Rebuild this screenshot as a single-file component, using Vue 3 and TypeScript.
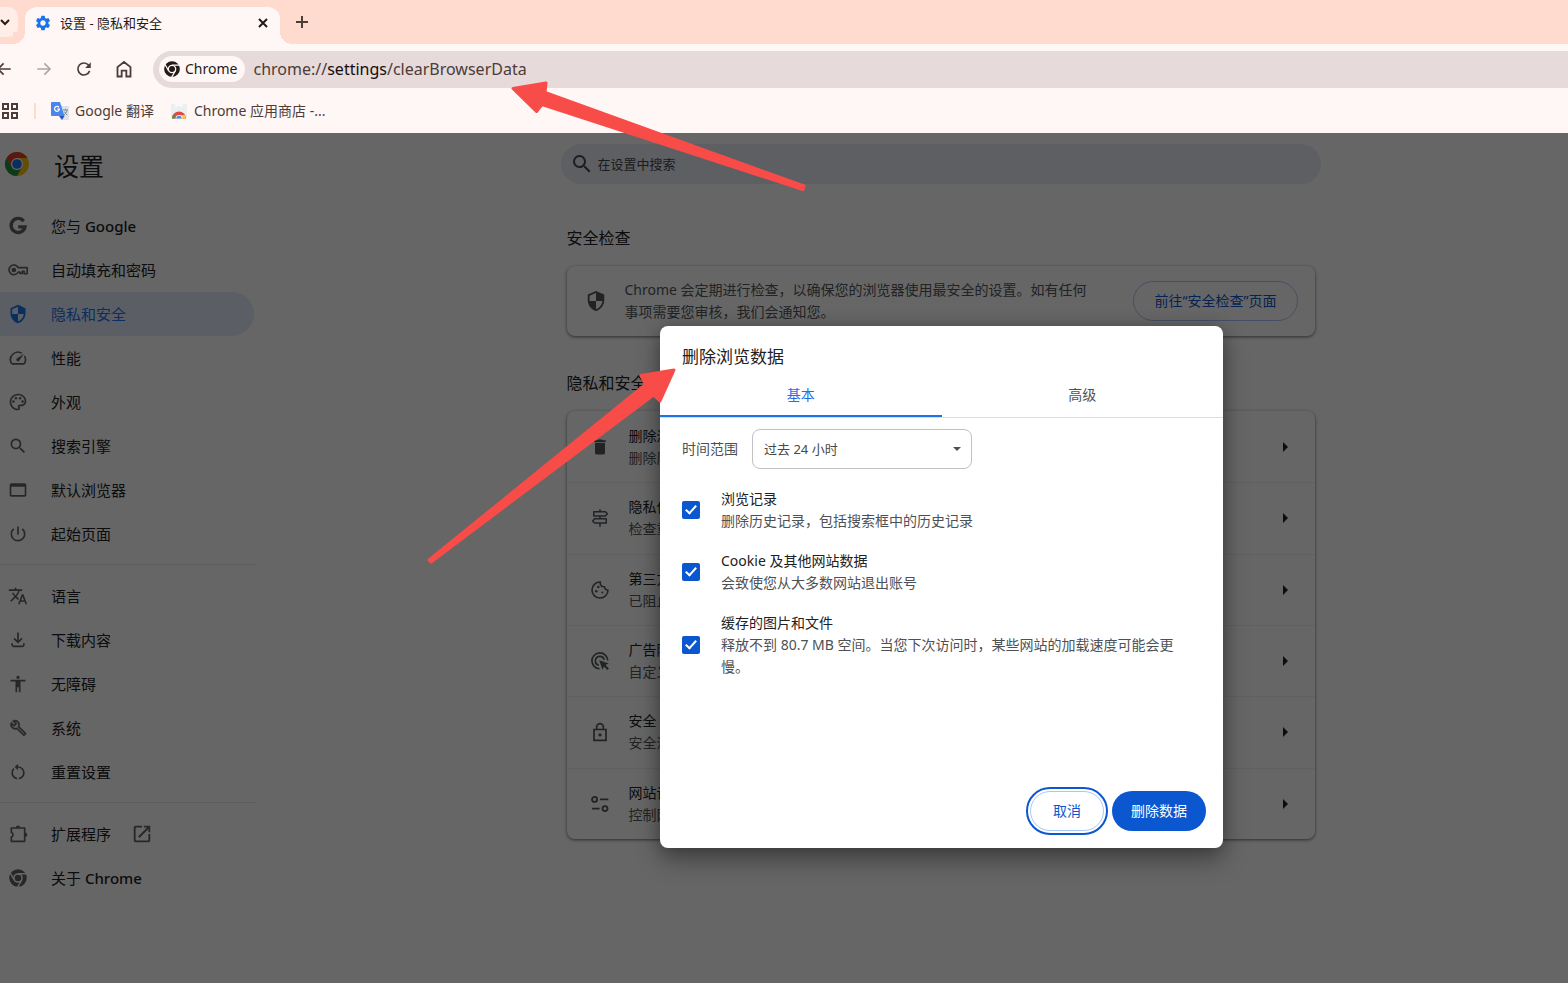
<script setup lang="ts">
import { ref } from 'vue'

interface NavItem {
  icon: string
  label: string
  product?: string
  active?: boolean
  external?: boolean
}

interface SettingRow {
  icon: string
  title: string
  detail: string
}

const icons: Record<string, string> = {
  google:
    '<path fill="none" stroke="currentColor" stroke-width="4" d="M18.8 6.2A8.4 8.4 0 1 0 20.4 13H12.2"/>',
  key:
    '<path fill="none" stroke="currentColor" stroke-width="2" stroke-linejoin="round" d="M12.2 9.2H23v7.300h-3.600v-3h-2.200v2.500h-3v-1.600h-2A5.800 5.800 0 1 1 12.200 9.200z"/><circle cx="7" cy="12" r="2.800"/>',
  shield:
    '<path d="M12 1 3 5v6c0 5.55 3.84 10.74 9 12 5.16-1.26 9-6.45 9-12V5l-9-4zm0 10.99h7c-.53 4.12-3.28 7.79-7 8.94V12H5V6.3l7-3.11v8.8z"/>',
  speed:
    '<path d="m20.38 8.57-1.23 1.85a8 8 0 0 1-.22 7.58H5.07A8 8 0 0 1 15.58 6.85l1.85-1.23A10 10 0 0 0 3.35 19a2 2 0 0 0 1.72 1h13.85a2 2 0 0 0 1.74-1 10 10 0 0 0-.27-10.44z"/><path d="M10.59 15.41a2 2 0 0 0 2.83 0l5.66-8.49-8.49 5.66a2 2 0 0 0 0 2.83z"/>',
  palette:
    '<path d="M12 22C6.49 22 2 17.51 2 12S6.49 2 12 2s10 4.04 10 9c0 3.31-2.69 6-6 6h-1.77c-.28 0-.5.22-.5.5 0 .12.05.23.13.33.41.47.64 1.06.64 1.67A2.5 2.5 0 0 1 12 22zm0-18c-4.41 0-8 3.59-8 8s3.59 8 8 8c.28 0 .5-.22.5-.5a.54.54 0 0 0-.14-.35c-.41-.46-.63-1.05-.63-1.65a2.5 2.5 0 0 1 2.5-2.5H16c2.21 0 4-1.79 4-4 0-3.86-3.59-7-8-7z"/><circle cx="6.5" cy="11.5" r="1.5"/><circle cx="9.5" cy="7.5" r="1.5"/><circle cx="14.5" cy="7.5" r="1.5"/><circle cx="17.5" cy="11.5" r="1.5"/>',
  search:
    '<path d="M15.5 14h-.79l-.28-.27A6.471 6.471 0 0 0 16 9.5 6.5 6.5 0 1 0 9.5 16c1.61 0 3.09-.59 4.23-1.57l.27.28v.79l5 4.99L20.49 19l-4.99-5zm-6 0C7.01 14 5 11.99 5 9.5S7.01 5 9.5 5 14 7.01 14 9.5 11.99 14 9.5 14z"/>',
  window:
    '<path d="M20 4H4c-1.11 0-2 .9-2 2v12c0 1.1.89 2 2 2h16c1.1 0 2-.9 2-2V6c0-1.1-.89-2-2-2zm0 14H4V8h16v10z"/>',
  power:
    '<path d="M13 3h-2v10h2V3zm4.83 2.17-1.42 1.42A6.92 6.92 0 0 1 19 12c0 3.87-3.13 7-7 7A6.995 6.995 0 0 1 7.58 6.58L6.17 5.17A8.932 8.932 0 0 0 3 12a9 9 0 0 0 18 0c0-2.74-1.23-5.18-3.17-6.83z"/>',
  translate:
    '<path d="m12.87 15.07-2.54-2.51.03-.03A17.52 17.52 0 0 0 14.07 6H17V4h-7V2H8v2H1v1.99h11.17C11.5 7.92 10.44 9.75 9 11.35 8.07 10.32 7.3 9.19 6.69 8h-2c.73 1.63 1.73 3.17 2.98 4.56l-5.09 5.02L4 19l5-5 3.11 3.11.76-2.04zM18.5 10h-2L12 22h2l1.12-3h4.75L21 22h2l-4.5-12zm-2.62 7 1.62-4.33L19.12 17h-3.24z"/>',
  download:
    '<path fill="none" stroke="currentColor" stroke-width="2" d="M12 3v11.5M7.2 10l4.8 4.8 4.8-4.8M5 16v2a1.6 1.6 0 0 0 1.6 1.6h10.8A1.6 1.6 0 0 0 19 18v-2"/>',
  accessibility:
    '<path d="M12 2c1.1 0 2 .9 2 2s-.9 2-2 2-2-.9-2-2 .9-2 2-2zm9 7h-6v13h-2v-6h-2v6H9V9H3V7h18v2z"/>',
  wrench:
    '<g transform="translate(2 1.6) scale(.87)" stroke="currentColor" stroke-width=".5"><path d="M22.61 18.99l-9.08-9.08c.93-2.34.45-5.1-1.44-7C9.79.61 6.21.4 3.66 2.26L7.5 6.11 6.08 7.52 2.25 3.69C.39 6.23.6 9.82 2.9 12.11c1.86 1.86 4.57 2.35 6.89 1.48l9.11 9.11c.39.39 1.02.39 1.41 0l2.3-2.3c.4-.38.4-1.01 0-1.41zm-3 1.6l-9.46-9.46c-.61.45-1.29.72-2 .82-1.36.2-2.79-.21-3.83-1.25C3.37 9.76 2.93 8.5 3 7.26l3.09 3.09 4.24-4.24-3.09-3.09c1.24-.07 2.49.37 3.44 1.31 1.08 1.08 1.49 2.57 1.24 3.96-.12.71-.42 1.37-.88 1.96l9.45 9.45-.88.89z"/></g>',
  reset:
    '<path d="M12 5V2L8 6l4 4V7c3.31 0 6 2.69 6 6 0 2.97-2.17 5.43-5 5.91v2.02c3.95-.49 7-3.85 7-7.93 0-4.42-3.58-8-8-8zm-6 8c0-1.65.67-3.15 1.76-4.24L6.34 7.34A8.014 8.014 0 0 0 4 13c0 4.08 3.05 7.44 7 7.93v-2.02c-2.83-.48-5-2.94-5-5.91z"/>',
  extension:
    '<path fill="none" stroke="currentColor" stroke-width="2" stroke-linejoin="round" d="M4 4.8h16v16H4v-5.2a2.8 2.8 0 0 0 0-5.4z"/><path d="M9.4 4.5a2.6 2.6 0 0 1 5.2 0zM20.5 10.2a2.6 2.6 0 0 1 0 5.2z"/>',
  chrome:
    '<path fill-rule="evenodd" d="M12 1.500a10.500 10.500 0 1 0 0 21 10.500 10.500 0 1 0 0-21zM12 6.200a5.800 5.800 0 1 1 0 11.600 5.800 5.800 0 1 1 0-11.600z"/><circle cx="12" cy="12" r="4"/><path fill="none" stroke="var(--gap)" stroke-width="1.700" d="M12 6.900h10M7.600 14.600 2.700 6M16.400 14.600l-5 8.500"/>',
  launch:
    '<path d="M19 19H5V5h7V3H5a2 2 0 0 0-2 2v14a2 2 0 0 0 2 2h14c1.1 0 2-.9 2-2v-7h-2v7zM14 3v2h3.59l-9.83 9.83 1.41 1.41L19 6.41V10h2V3h-7z"/>',
  trash:
    '<path d="M6 19c0 1.1.9 2 2 2h8c1.1 0 2-.9 2-2V7H6v12zM19 4h-3.5l-1-1h-5l-1 1H5v2h14V4z"/>',
  signpost:
    '<path fill="none" stroke="currentColor" stroke-width="1.8" stroke-linejoin="round" d="M12 1.500v3M12 9.500v3.500M12 18v4.500M4.500 4.500h14L20.800 7l-2.300 2.500h-14zM19.500 13h-14L3.200 15.500 5.500 18h14z"/>',
  cookie:
    '<path fill="none" stroke="currentColor" stroke-width="1.900" stroke-linejoin="round" d="M12.500 2.500A9.600 9.600 0 1 0 21.600 12a3.600 3.600 0 0 1-4.100-4 4.200 4.200 0 0 1-5-5.500z"/><circle cx="10" cy="8.500" r="1.500"/><circle cx="7.500" cy="13.500" r="1.500"/><circle cx="14.800" cy="15" r="1.200"/>',
  ads:
    '<path fill="none" stroke="currentColor" stroke-width="2" d="M11.500 21.300A9.500 9.500 0 1 1 21.300 11.500M10.500 17.100A5.400 5.400 0 1 1 17.100 10.500"/><path d="m11 11 11.500 4-4 1.800 4.200 4.200-1.700 1.700-4.200-4.200-1.800 4z"/>',
  lock:
    '<path fill="none" stroke="currentColor" stroke-width="2" d="M4.800 9h14.400v13H4.800zM8 9V6a4 4 0 0 1 8 0v3"/><circle cx="12" cy="15.500" r="2"/>',
  sliders:
    '<g fill="none" stroke="currentColor" stroke-width="2.200"><circle cx="5.500" cy="6.500" r="3"/><path d="M12 6.500h10M2.500 17.500h9"/><circle cx="18" cy="17.500" r="3"/></g>',
  gear:
    '<path d="M19.140 12.940c.04-.3.060-.61.060-.94 0-.32-.02-.64-.07-.94l2.030-1.580a.49.49 0 0 0 .12-.61l-1.920-3.320a.488.488 0 0 0-.59-.22l-2.390.96c-.5-.38-1.030-.7-1.620-.94l-.36-2.540a.484.484 0 0 0-.48-.41h-3.840c-.24 0-.43.17-.47.41l-.36 2.540c-.59.24-1.130.57-1.620.94l-2.390-.96c-.22-.08-.47 0-.59.22L2.740 8.870c-.12.21-.08.47.12.61l2.030 1.580c-.05.3-.09.63-.09.94s.02.64.070.94l-2.030 1.580a.49.49 0 0 0-.12.61l1.920 3.320c.12.22.37.29.59.22l2.390-.96c.5.38 1.030.7 1.620.94l.36 2.540c.05.24.24.41.48.41h3.840c.24 0 .44-.17.47-.41l.36-2.540c.59-.24 1.130-.56 1.620-.94l2.390.96c.22.080.47 0 .59-.22l1.920-3.320c.12-.22.070-.47-.12-.61l-2.010-1.580zM12 15.600A3.610 3.610 0 0 1 8.400 12c0-1.980 1.620-3.600 3.600-3.600s3.600 1.620 3.600 3.600-1.620 3.600-3.600 3.600z"/>',
  back: '<path fill="none" stroke="currentColor" stroke-width="2.200" d="M21 12H4M11.500 4.500 4 12l7.500 7.500"/>',
  forward: '<path fill="none" stroke="currentColor" stroke-width="2.200" d="M3 12h17M12.500 4.500 20 12l-7.500 7.500"/>',
  reload:
    '<path fill="none" stroke="currentColor" stroke-width="2.200" d="M19.500 14.500A8 8 0 1 1 18.200 7l1.500 1.700"/><path d="M21 3v7.500h-7.500z"/>',
  home:
    '<path fill="none" stroke="currentColor" stroke-width="2.200" d="M4.200 21V9.700L12 3.500l7.800 6.200V21h-5v-7h-5.600v7z"/>',
}

const navGroups: NavItem[][] = [
  [
    { icon: 'google', label: '您与', product: 'Google' },
    { icon: 'key', label: '自动填充和密码' },
    { icon: 'shield', label: '隐私和安全', active: true },
    { icon: 'speed', label: '性能' },
    { icon: 'palette', label: '外观' },
    { icon: 'search', label: '搜索引擎' },
    { icon: 'window', label: '默认浏览器' },
    { icon: 'power', label: '起始页面' },
  ],
  [
    { icon: 'translate', label: '语言' },
    { icon: 'download', label: '下载内容' },
    { icon: 'accessibility', label: '无障碍' },
    { icon: 'wrench', label: '系统' },
    { icon: 'reset', label: '重置设置' },
  ],
  [
    { icon: 'extension', label: '扩展程序', external: true },
    { icon: 'chrome', label: '关于', product: 'Chrome' },
  ],
]

const rows: SettingRow[] = [
  { icon: 'trash', title: '删除浏', detail: '删除历' },
  { icon: 'signpost', title: '隐私保', detail: '检查重' },
  { icon: 'cookie', title: '第三方', detail: '已阻止' },
  { icon: 'ads', title: '广告隐', detail: '自定义' },
  { icon: 'lock', title: '安全', detail: '安全浏' },
  { icon: 'sliders', title: '网站设', detail: '控制网' },
]

const tabs = ['基本', '高级']
const activeTab = ref(0)
const range = ref('过去 24 小时')

const options = ref([
  { id: 'history', title: '浏览记录', detail: '删除历史记录，包括搜索框中的历史记录', checked: true },
  { id: 'cookies', title: 'Cookie 及其他网站数据', detail: '会致使您从大多数网站退出账号', checked: true },
  {
    id: 'cache',
    title: '缓存的图片和文件',
    detail: '释放不到 80.7 MB 空间。当您下次访问时，某些网站的加载速度可能会更慢。',
    checked: true,
  },
])
</script>

<template>
  <div class="browser">
    <header class="chrome-ui">
      <div class="tab-strip">
        <button class="tab-search" type="button" aria-label="搜索标签页">
          <svg viewBox="0 0 10 10" width="10" height="10"><path d="M1 3l4 4 4-4" fill="none" stroke="currentColor" stroke-width="2" /></svg>
        </button>
        <div class="tab">
          <svg class="tab-icon" viewBox="0 0 24 24" width="18" height="18" fill="currentColor" v-html="icons.gear" />
          <span class="tab-title">设置 - 隐私和安全</span>
          <button class="tab-close" type="button" aria-label="关闭">
            <svg viewBox="0 0 10 10" width="10" height="10"><path d="M1 1l8 8M9 1l-8 8" stroke="currentColor" stroke-width="2" /></svg>
          </button>
        </div>
        <button class="new-tab" type="button" aria-label="打开新的标签页">
          <svg viewBox="0 0 12 12" width="12" height="12"><path d="M6 0v12M0 6h12" stroke="currentColor" stroke-width="2" /></svg>
        </button>
      </div>

      <div class="toolbar">
        <button class="tool" type="button" aria-label="后退">
          <svg viewBox="0 0 24 24" width="18" height="18" fill="currentColor" v-html="icons.back" />
        </button>
        <button class="tool dim" type="button" aria-label="前进">
          <svg viewBox="0 0 24 24" width="18" height="18" fill="currentColor" v-html="icons.forward" />
        </button>
        <button class="tool" type="button" aria-label="重新加载">
          <svg viewBox="0 0 24 24" width="18" height="18" fill="currentColor" v-html="icons.reload" />
        </button>
        <button class="tool" type="button" aria-label="主页">
          <svg viewBox="0 0 24 24" width="20" height="20" fill="currentColor" v-html="icons.home" />
        </button>
        <div class="omnibox">
          <button class="site-chip" type="button">
            <svg viewBox="0 0 24 24" width="18" height="18" fill="currentColor" v-html="icons.chrome" />
            <span>Chrome</span>
          </button>
          <div class="url" role="textbox" contenteditable="true" spellcheck="false" aria-label="地址">chrome://<b>settings</b>/clearBrowserData</div>
        </div>
      </div>

      <nav class="bookmarks">
        <button class="apps" type="button" aria-label="应用">
          <svg viewBox="0 0 16 16" width="16" height="16"><path d="M1 1h5v5H1zM10 1h5v5h-5zM1 10h5v5H1zM10 10h5v5h-5z" fill="none" stroke="currentColor" stroke-width="2" /></svg>
        </button>
        <span class="divider" />
        <a class="bookmark" href="#translate">
          <svg viewBox="0 0 18 18" width="18" height="18">
            <path d="M7 4h11v14h-7z" fill="#dfe3e8" />
            <path d="M1 0h8l4.500 14H1a1 1 0 0 1-1-1V1a1 1 0 0 1 1-1z" fill="#4a86ee" />
            <path d="M8 14h5.500L11 18z" fill="#2456c4" />
            <path d="M8 5.300A2.500 2.500 0 1 0 8.500 7.200H6.200" fill="none" stroke="#fff" stroke-width="1.200" />
            <path d="M12 8h5M14.500 6.800V8M16 8.200c-.5 2.300-2 4-3 4.800M13.300 9.500c.6 1.500 1.700 2.700 3 3.500" fill="none" stroke="#7b8794" />
          </svg>
          <span>Google 翻译</span>
        </a>
        <a class="bookmark" href="#store">
          <svg viewBox="0 0 18 18" width="18" height="18">
            <path d="M1 2h16v14.500H1z" fill="#eceff1" />
            <path d="M6 5V3h6v2" fill="none" stroke="#fff" stroke-width="1.200" />
            <path d="M2 16.500a7 7 0 0 1 14 0z" fill="#de4a3d" />
            <path d="M2 16.500a7 7 0 0 1 1-3.600l3.500 3.600z" fill="#2e9e58" />
            <path d="M16 16.500a7 7 0 0 0-1-3.600H11l-1 3.600z" fill="#f8c83a" />
            <path d="M5.500 16.500a3.500 3.500 0 0 1 7 0z" fill="#fff" />
            <path d="M6.300 16.500a2.700 2.700 0 0 1 5.400 0z" fill="#4a8af4" />
          </svg>
          <span>Chrome 应用商店 -...</span>
        </a>
      </nav>
    </header>

    <div class="page">
      <aside class="sidebar">
        <div class="brand">
          <svg viewBox="0 0 24 24" width="24" height="24">
            <circle cx="12" cy="12" r="12" fill="#fbc116" />
            <path d="M12 6h10.400A12 12 0 0 0 1.600 6l5.200 9z" fill="#e33b2e" />
            <path d="M12 24l5.200-9-5.200-3-5.200 3L1.600 6A12 12 0 0 0 12 24z" fill="#229342" />
            <circle cx="12" cy="12" r="6" fill="#fff" />
            <circle cx="12" cy="12" r="4.800" fill="#1a73e8" />
          </svg>
          <h1>设置</h1>
        </div>
        <nav class="menu">
          <div v-for="(group, g) in navGroups" :key="g" class="group">
            <a v-for="item in group" :key="item.label" href="#" class="nav-item" :class="{ active: item.active }">
              <svg viewBox="0 0 24 24" width="20" height="20" fill="currentColor" v-html="icons[item.icon]" />
              <span>{{ item.label }}<b v-if="item.product">&nbsp;{{ item.product }}</b></span>
              <svg v-if="item.external" class="external" viewBox="0 0 24 24" width="22" height="22" fill="currentColor" v-html="icons.launch" />
            </a>
          </div>
        </nav>
      </aside>

      <main class="content">
        <label class="search">
          <svg viewBox="0 0 24 24" width="24" height="24" fill="currentColor" v-html="icons.search" />
          <input type="search" placeholder="在设置中搜索" aria-label="在设置中搜索" />
        </label>

        <section>
          <h2>安全检查</h2>
          <div class="card check-card">
            <svg viewBox="0 0 24 24" width="22" height="22" fill="currentColor" v-html="icons.shield" />
            <p>Chrome 会定期进行检查，以确保您的浏览器使用最安全的设置。如有任何事项需要您审核，我们会通知您。</p>
            <button class="outline-btn" type="button">前往“安全检查”页面</button>
          </div>
        </section>

        <section class="privacy">
          <h2>隐私和安全</h2>
          <div class="card list-card">
            <a v-for="row in rows" :key="row.title" href="#" class="row">
              <svg viewBox="0 0 24 24" width="20" height="20" fill="currentColor" v-html="icons[row.icon]" />
              <span class="row-text">
                <span class="row-title">{{ row.title }}</span>
                <span class="row-detail">{{ row.detail }}</span>
              </span>
              <svg class="chevron" viewBox="0 0 5 10" width="5" height="10"><path d="M0 0l5 5-5 5z" fill="currentColor" /></svg>
            </a>
          </div>
        </section>
      </main>

      <div class="scrim">
        <div class="dialog" role="dialog" aria-modal="true" aria-labelledby="dialog-title">
          <h2 id="dialog-title">删除浏览数据</h2>
          <div class="tabs" role="tablist">
            <button
              v-for="(tab, i) in tabs"
              :key="tab"
              type="button"
              role="tab"
              :aria-selected="activeTab === i"
              :class="{ selected: activeTab === i }"
              @click="activeTab = i"
            >{{ tab }}</button>
          </div>

          <div class="range">
            <label for="time-range">时间范围</label>
            <div class="select-wrap">
              <select id="time-range" v-model="range">
                <option>过去 24 小时</option>
              </select>
              <svg viewBox="0 0 8 4" width="8" height="4"><path d="M0 0h8L4 4z" fill="currentColor" /></svg>
            </div>
          </div>

          <div class="options">
            <label v-for="opt in options" :key="opt.id" class="option" :for="opt.id">
              <input :id="opt.id" v-model="opt.checked" type="checkbox" />
              <span class="option-text">
                <span class="option-title">{{ opt.title }}</span>
                <span class="option-detail">{{ opt.detail }}</span>
              </span>
            </label>
          </div>

          <div class="actions">
            <button class="cancel" type="button">取消</button>
            <button class="confirm" type="button">删除数据</button>
          </div>
        </div>
      </div>
    </div>

    <svg class="arrows" viewBox="0 0 820 580" width="820" height="580" aria-hidden="true">
      <path d="M513 88.500 546 83l-1 9.500L804 186l-1 3.500L542 104.500l-5.500 7z" />
      <path d="M674 370 641 375.500l4.500 9L429 560l2 2L653.500 395l6.500 6z" />
    </svg>
  </div>
</template>

<style>
body {
  margin: 0;
}
</style>

<style scoped>
.browser {
  position: relative;
  display: flex;
  flex-direction: column;
  min-height: 100vh;
  overflow: hidden;
  font-family: "Noto Sans", "Noto Sans CJK SC", sans-serif;
  font-size: 14px;
  line-height: 22px;
  color: #202124;
}

.browser *,
.browser *::before,
.browser *::after {
  box-sizing: border-box;
}

button,
input,
select {
  font: inherit;
  color: inherit;
  margin: 0;
  padding: 0;
  border: 0;
  background: none;
}

a {
  color: inherit;
  text-decoration: none;
}

svg {
  flex: none;
  display: block;
}

h1,
h2,
p {
  margin: 0;
  font-weight: 400;
}

/* Browser frame */
.chrome-ui {
  background: #fff7f5;
  color: #4d3c38;
}

.tab-strip {
  display: flex;
  height: 44px;
  padding-top: 7px;
  background: #ffdacf;
}

.tab-search {
  display: flex;
  align-items: center;
  width: 18px;
  height: 30px;
  border-radius: 0 10px 10px 0;
  background: #ffede7;
  color: #241a18;
}

.tab {
  position: relative;
  display: flex;
  align-items: center;
  width: 255px;
  margin-left: 7px;
  padding: 0 12px 6px 9px;
  border-radius: 12px 12px 0 0;
  background: #fff7f5;
  color: #241a18;
}

.tab::before,
.tab::after {
  content: "";
  position: absolute;
  bottom: 0;
  width: 12px;
  height: 12px;
}

.tab::before {
  right: 100%;
  background: radial-gradient(circle at 0 0, #ffdacf 12px, #fff7f5 12px);
}

.tab::after {
  left: 100%;
  background: radial-gradient(circle at 100% 0, #ffdacf 12px, #fff7f5 12px);
}

.tab-icon {
  color: #1a73e8;
}

.tab-title {
  flex: 1;
  margin-left: 8px;
  font-size: 13px;
}

.new-tab {
  display: flex;
  align-items: center;
  height: 30px;
  margin-left: 16px;
  color: #4d3c38;
}

.toolbar {
  display: flex;
  align-items: center;
  height: 50px;
  margin-left: -16px;
}

.tool {
  display: flex;
  align-items: center;
  justify-content: center;
  width: 40px;
  height: 40px;
  color: #4d3c38;
}

.tool.dim {
  color: #b0a5a3;
}

.omnibox {
  flex: 1;
  display: flex;
  align-items: center;
  height: 37px;
  margin-left: 9px;
  padding-left: 6px;
  border-radius: 19px 0 0 19px;
  background: #e6dada;
}

.site-chip {
  --gap: #fff7f5;
  display: flex;
  align-items: center;
  gap: 4px;
  height: 26px;
  padding: 0 8px 0 4px;
  border-radius: 13px;
  background: #fff7f5;
  color: #241a18;
}

.url {
  flex: 1;
  margin-left: 8px;
  font-size: 16px;
  outline: none;
}

.url b {
  font-weight: 400;
  color: #140d0c;
}

.bookmarks {
  display: flex;
  align-items: center;
  height: 39px;
  padding: 0 0 5px 2px;
}

.divider {
  width: 2px;
  height: 16px;
  margin: 0 15px 0 16px;
  background: #ffdacf;
}

.bookmark {
  display: flex;
  align-items: center;
  gap: 6px;
  margin-right: 16px;
}

/* Settings page */
.page {
  position: relative;
  flex: 1;
  display: flex;
  background: #fff;
}

.sidebar {
  width: 313px;
}

.brand {
  display: flex;
  align-items: center;
  gap: 25px;
  height: 62px;
  padding-left: 5px;
}

.brand h1 {
  padding-top: 4px;
  font-size: 25px;
  line-height: 32px;
}

.menu {
  width: 257px;
  padding-top: 9px;
}

.group + .group {
  margin-top: 8px;
  padding-top: 9px;
  border-top: 1px solid #e8e8e8;
}

.nav-item {
  --gap: #fff;
  display: flex;
  align-items: center;
  gap: 23px;
  height: 44px;
  margin-right: 3px;
  padding-left: 8px;
  border-radius: 0 22px 22px 0;
  font-size: 15px;
}

.nav-item b {
  font-weight: 500;
}

.nav-item svg {
  color: #5f6368;
}

.nav-item .external {
  margin-left: -3px;
}

.nav-item.active {
  background: #e4ebfd;
}

.nav-item.active,
.nav-item.active svg {
  color: #1a73e8;
}

.content {
  flex: 1;
  display: flex;
  flex-direction: column;
  align-items: center;
  padding-top: 11px;
}

.search {
  display: flex;
  align-items: center;
  gap: 4px;
  width: 100%;
  max-width: 760px;
  height: 40px;
  padding: 0 20px 0 9px;
  border-radius: 20px;
  background: #e9eef6;
  color: #47484c;
}

.search input {
  flex: 1;
  outline: none;
  font-size: 13px;
}

.search input::placeholder {
  color: #47484c;
  opacity: 1;
}

section {
  width: 100%;
  max-width: 748px;
  padding-top: 42px;
}

section h2 {
  font-size: 16px;
  line-height: 24px;
}

.privacy {
  padding-top: 35px;
}

.card {
  margin-top: 16px;
  border-radius: 8px;
  background: #fff;
  box-shadow: 0 1px 3px rgba(0, 0, 0, 0.4), 0 1px 4px rgba(0, 0, 0, 0.2);
}

.check-card {
  display: flex;
  align-items: center;
  height: 70px;
  padding: 0 17px 0 18px;
  color: #54575b;
}

.check-card p {
  width: 470px;
  margin-left: 18px;
}

.outline-btn {
  height: 40px;
  margin-left: auto;
  padding: 0 20px;
  border: 1px solid #a8c7fa;
  border-radius: 20px;
  color: #0b57d0;
}

.list-card {
  display: grid;
  grid-template-rows: repeat(6, 1fr);
  min-height: 428px;
}

.row {
  display: flex;
  align-items: center;
  padding: 0 27px 0 23px;
  color: #54575b;
}

.row + .row {
  border-top: 1px solid #efefef;
}

.row-text {
  display: flex;
  flex-direction: column;
  margin-left: 19px;
}

.row-title {
  color: #202124;
}

.chevron {
  margin-left: auto;
  color: #202124;
}

/* Dialog */
.scrim {
  position: absolute;
  inset: 0;
  display: flex;
  align-items: flex-start;
  justify-content: center;
  padding: 193px 0 0 315px;
  background: rgba(0, 0, 0, 0.6);
}

.dialog {
  display: flex;
  flex-direction: column;
  width: 563px;
  min-height: 522px;
  border-radius: 8px;
  background: #fff;
  box-shadow: 0 12px 24px rgba(0, 0, 0, 0.35), 0 0 16px rgba(0, 0, 0, 0.2);
}

.dialog h2 {
  padding: 19px 22px 0;
  font-size: 17px;
  line-height: 24px;
}

.tabs {
  display: flex;
  height: 49px;
  border-bottom: 1px solid #dadce0;
}

.tabs button {
  flex: 1;
  padding-top: 5px;
  border-bottom: 2px solid transparent;
  color: #4d5156;
}

.tabs button.selected {
  border-color: #1a73e8;
  color: #1a73e8;
}

.range {
  display: flex;
  align-items: center;
  gap: 14px;
  padding: 11px 22px 0;
  color: #4d5156;
}

.select-wrap {
  position: relative;
}

.select-wrap select {
  width: 220px;
  height: 40px;
  padding: 0 11px;
  appearance: none;
  border: 1px solid #c0c2c5;
  border-radius: 8px;
  font-size: 13px;
  color: #47484c;
}

.select-wrap svg {
  position: absolute;
  top: 18px;
  right: 11px;
  pointer-events: none;
}

.options {
  display: flex;
  flex-direction: column;
  gap: 18px;
  padding: 19px 33px 0 22px;
}

.option {
  display: flex;
  align-items: center;
  gap: 21px;
}

.option input {
  flex: none;
  display: flex;
  justify-content: center;
  width: 18px;
  height: 18px;
  appearance: none;
  border: 2px solid #5f6368;
  border-radius: 2px;
}

.option input:checked {
  border: 0;
  background: #0b57d0;
}

.option input:checked::after {
  content: "";
  width: 6px;
  height: 11px;
  margin-top: 2px;
  border: solid #fff;
  border-width: 0 2px 2px 0;
  transform: rotate(42deg);
}

.option-text {
  display: flex;
  flex-direction: column;
  max-width: 468px;
}

.option-detail {
  color: #4d5156;
}

.actions {
  display: flex;
  justify-content: flex-end;
  gap: 8px;
  margin-top: auto;
  padding: 0 17px 17px;
}

.actions button {
  height: 40px;
  border-radius: 20px;
}

.cancel {
  padding: 0 22px;
  border: 1px solid #a8c7fa;
  outline: 2px solid #0b57d0;
  outline-offset: 2px;
  color: #0b57d0;
}

.confirm {
  padding: 0 19px;
  background: #0b57d0;
  color: #fff;
}

.arrows {
  position: absolute;
  top: 0;
  left: 0;
  pointer-events: none;
  fill: #f84c48;
  stroke: #f84c48;
  stroke-width: 3;
  stroke-linejoin: round;
}
</style>
